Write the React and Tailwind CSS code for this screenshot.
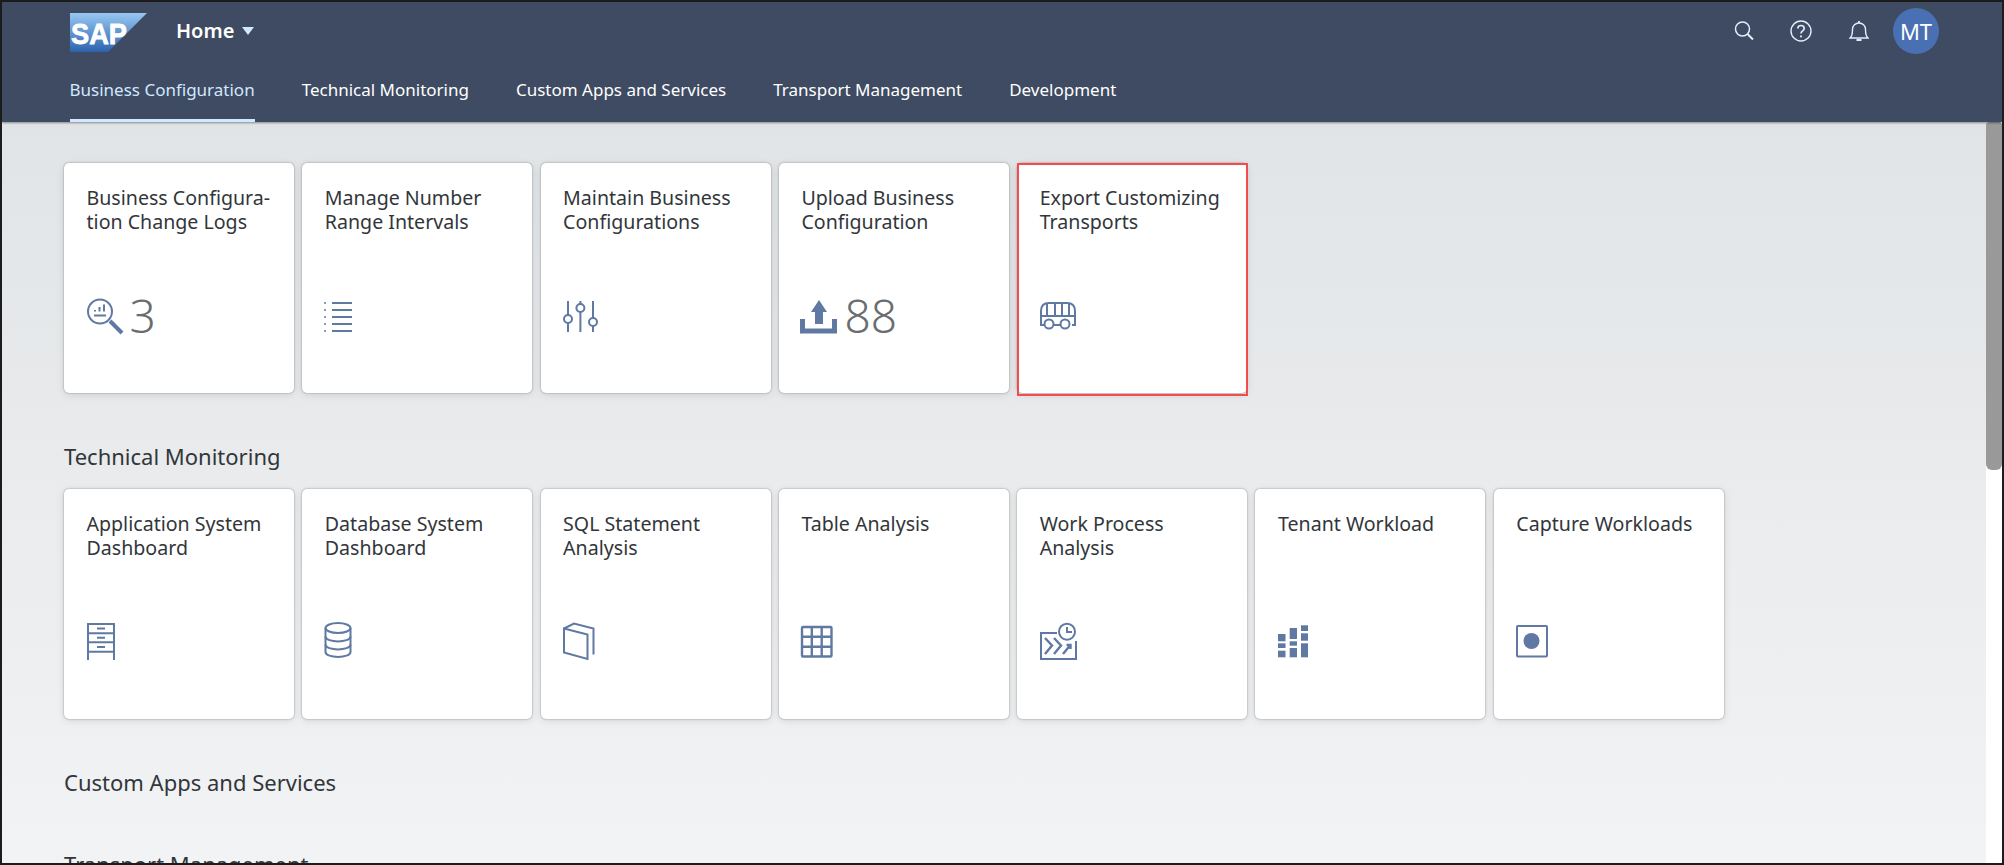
import React from "react";

const tabs = ["Business Configuration", "Technical Monitoring", "Custom Apps and Services", "Transport Management", "Development"];

// Tile icons share one 40x40 box
const Icon = ({ children }) => (
  <svg viewBox="0 0 40 40" className="w-10 h-10 overflow-visible shrink-0 text-[#5f79a3]" fill="none" stroke="currentColor" strokeWidth="2">
    {children}
  </svg>
);

const LogSearchIcon = () => (
  <Icon>
    <circle cx="13" cy="16.5" r="12" />
    <path d="M23 26 L35 38" strokeWidth="4" />
    <path d="M7 20.5 H19" />
    <path d="M8 15 V16.5 M12.5 12 V16.5 M17 9.5 V16.5" />
  </Icon>
);

const ListIcon = () => (
  <Icon>
    <path d="M7 8 H27 M7 15 H27 M7 22 H27 M7 29 H27 M7 36 H27" />
    <path d="M-1 8 H1 M-1 15 H1 M-1 22 H1 M-1 29 H1 M-1 36 H1" strokeWidth="1.6" />
  </Icon>
);

const SlidersIcon = () => (
  <Icon>
    <path d="M5 6 V37 M17.4 6 V37 M30 6 V37" />
    <circle cx="5" cy="24" r="4" fill="white" />
    <circle cx="17.4" cy="13" r="4" fill="white" />
    <circle cx="30" cy="27" r="4" fill="white" />
  </Icon>
);

const UploadIcon = () => (
  <Icon>
    <path d="M18 5 L26 17 H22 V29 H14 V17 H10 Z M-1 24 H4 V33.5 H31 V24 H36 V38.5 H-1 Z" fill="currentColor" stroke="none" />
  </Icon>
);

const BusIcon = () => (
  <Icon>
    <path d="M4 30 H1 V16 Q1 8 9 8 H27 Q35 8 35 16 V30 H32" />
    <path d="M1 21 H35 M7 8 V21 M15 8 V21 M22 8 V21 M29 8 V21 M14 30 H20" />
    <circle cx="9" cy="29" r="4.5" />
    <circle cx="25" cy="29" r="4.5" />
  </Icon>
);

const CabinetIcon = () => (
  <Icon>
    <path d="M1 39 V3 H27 V39 M1 12.3 H27 M1 21.3 H27 M1 30.7 H27" />
    <path d="M10 7.5 H18 M10 16.8 H18 M10 26 H18" />
  </Icon>
);

const DatabaseIcon = () => (
  <Icon>
    <ellipse cx="13" cy="7" rx="12.5" ry="5" />
    <path d="M0.5 7 V31 C0.5 37.5 25.5 37.5 25.5 31 V7" />
    <path d="M0.5 15.5 C0.5 22 25.5 22 25.5 15.5 M0.5 23.5 C0.5 30 25.5 30 25.5 23.5" />
  </Icon>
);

const BookIcon = () => (
  <Icon>
    <path d="M1 7.5 L24.5 13.5 V38 L1 31.5 Z" />
    <path d="M1 7.5 L11 2.5 L30.5 7.5 V33.5" />
  </Icon>
);

const TableIcon = () => (
  <Icon>
    <rect x="1" y="6" width="29.5" height="29.5" rx="1" strokeWidth="2.4" />
    <path d="M10.8 6 V35.5 M20.7 6 V35.5 M1 15.8 H30.5 M1 25.7 H30.5" strokeWidth="2.4" />
  </Icon>
);

const WorkProcessIcon = () => (
  <Icon>
    <path d="M17 12 H1 V38 H36 V20" />
    <circle cx="27" cy="10.7" r="8" />
    <path d="M27 6 V11 H32" />
    <path d="M5 17 L12 24.5 L5 33 M14 17 L21 24.5 L14 33 M23 33 L30 24.5 M26.5 24 H30.5 V28" strokeWidth="2.4" />
  </Icon>
);

const WorkloadIcon = () => (
  <Icon>
    <g fill="currentColor" stroke="none">
      <rect x="0" y="13" width="7.5" height="7.3" />
      <rect x="0" y="22.3" width="7.5" height="4.7" />
      <rect x="0" y="29.7" width="7.5" height="6.6" />
      <rect x="11.7" y="7" width="7.3" height="11" />
      <rect x="11.7" y="20.3" width="7.3" height="4.4" />
      <rect x="11.7" y="27" width="7.3" height="9.3" />
      <rect x="23" y="4.3" width="7" height="5.7" />
      <rect x="23" y="12.3" width="7" height="7.4" />
      <rect x="23" y="22.3" width="7" height="14" />
    </g>
  </Icon>
);

const CaptureIcon = () => (
  <Icon>
    <rect x="1" y="5" width="30" height="30.5" rx="1" />
    <circle cx="15.5" cy="20" r="8" fill="currentColor" stroke="none" />
  </Icon>
);

const firstRow = [
  { title: ["Business Configura-", "tion Change Logs"], icon: <LogSearchIcon />, count: "3" },
  { title: ["Manage Number", "Range Intervals"], icon: <ListIcon /> },
  { title: ["Maintain Business", "Configurations"], icon: <SlidersIcon /> },
  { title: ["Upload Business", "Configuration"], icon: <UploadIcon />, count: "88" },
  { title: ["Export Customizing", "Transports"], icon: <BusIcon />, marked: true },
];

const secondRow = [
  { title: ["Application System", "Dashboard"], icon: <CabinetIcon /> },
  { title: ["Database System", "Dashboard"], icon: <DatabaseIcon /> },
  { title: ["SQL Statement", "Analysis"], icon: <BookIcon /> },
  { title: ["Table Analysis"], icon: <TableIcon /> },
  { title: ["Work Process", "Analysis"], icon: <WorkProcessIcon /> },
  { title: ["Tenant Workload"], icon: <WorkloadIcon /> },
  { title: ["Capture Workloads"], icon: <CaptureIcon /> },
];

const Tile = ({ title, icon, count, marked }) => (
  <div className="relative w-[230px] h-[230px] shrink-0 bg-white rounded-[5px] pl-[22.5px] pt-[23px] shadow-[0_0_2px_rgba(0,0,0,0.4),0_2px_8px_rgba(0,0,0,0.1)]">
    <div className="h-[109px] text-[19.6px] leading-[23.5px] text-[#32363a] whitespace-nowrap">
      {title.map((line) => (
        <div key={line}>{line}</div>
      ))}
    </div>
    <div className="flex items-center h-10">
      {icon}
      {count && <span className="-mt-[1px] ml-[3px] text-[46px] leading-none font-light text-[#6a6d70]">{count}</span>}
    </div>
    {marked && <div className="absolute top-0 left-0 -right-[1px] -bottom-[3px] border-2 border-[#f24c4c]" />}
  </div>
);

export default function App() {
  return (
    <div className="w-[2004px] h-[865px] flex flex-col overflow-hidden border-2 border-[#1c1c1c] font-['Noto_Sans',sans-serif]">
      <header className="h-[120px] shrink-0 bg-[#3e4b62] shadow-[0_1px_2px_rgba(0,0,0,0.4)] z-10">
        <div className="h-[58px] flex items-center pl-[68px] pr-[63px]">
          <svg viewBox="0 0 77 39" className="w-[77px] h-[39px] mt-[3px]">
            <defs>
              <linearGradient id="sap" x1="0" y1="0" x2="0" y2="1">
                <stop offset="0" stopColor="#97c8f2" />
                <stop offset="1" stopColor="#2d63ad" />
              </linearGradient>
            </defs>
            <path d="M0 0 H77 L38 39 H0 Z" fill="url(#sap)" />
            <text x="1" y="31" fontFamily="Liberation Sans" fontWeight="700" fontSize="30" textLength="56" lengthAdjust="spacingAndGlyphs" fill="white" stroke="white" strokeWidth="0.8">SAP</text>
          </svg>
          <span className="ml-[29px] text-[20px] font-semibold text-white">Home</span>
          <svg viewBox="0 0 12 8" className="ml-[8px] w-3 h-2 text-[#d1e8ff]">
            <path d="M0 0 H12 L6 8 Z" fill="currentColor" />
          </svg>
          <div className="flex-1" />
          <svg viewBox="0 0 20 20" className="w-5 h-5 text-[#e3eefa]" fill="none" stroke="currentColor" strokeWidth="1.5">
            <circle cx="8.5" cy="8" r="7" />
            <path d="M13.5 13 L19 18.5" strokeWidth="2" />
          </svg>
          <svg viewBox="0 0 22 22" className="ml-[36px] w-[22px] h-[22px] text-[#e3eefa]" fill="none" stroke="currentColor" strokeWidth="1.4">
            <circle cx="11" cy="11" r="10" />
            <path d="M7.8 8.5 C7.8 4.5 14.2 4.5 14.2 8.5 C14.2 11 11 10.8 11 13.5" strokeWidth="1.7" />
            <path d="M11 15.5 V17.2" strokeWidth="1.9" />
          </svg>
          <svg viewBox="0 0 20 22" className="ml-[37px] w-5 h-[22px] text-[#e3eefa]" fill="none" stroke="currentColor" strokeWidth="1.4">
            <path d="M1 18 C3.5 16 3.5 13.5 3.5 9.5 C3.5 5.5 6.5 3 10 3 C13.5 3 16.5 5.5 16.5 9.5 C16.5 13.5 16.5 16 19 18 Z" />
            <path d="M10 1 V3 M7.5 20 H12.5" strokeWidth="1.8" />
          </svg>
          <div className="ml-[24px] w-[46px] h-[46px] rounded-full bg-[#4a70b4] flex items-center justify-center text-[22px] text-white">MT</div>
        </div>
        <nav className="h-[62px] flex gap-[47px] pl-[67.5px]">
          {tabs.map((tab, i) => (
            <div
              key={tab}
              className={
                i === 0
                  ? "h-full flex items-center text-[17px] text-[#d1e8ff] border-b-[3px] border-[#d1e8ff] pt-[1px]"
                  : "h-full flex items-center text-[17px] text-white border-b-[3px] border-transparent pt-[1px]"
              }
            >
              {tab}
            </div>
          ))}
        </nav>
      </header>

      <div className="flex-1 min-h-0 flex">
        <main className="flex-1 min-w-0 overflow-hidden bg-gradient-to-b from-[#e1e4e6] to-[#f2f3f5] pl-[62px] pt-[41px]">
          <div className="flex gap-[8.3px]">
            {firstRow.map((tile) => (
              <Tile key={tile.title[0]} {...tile} />
            ))}
          </div>
          <h2 className="mt-[45px] mb-[15px] h-[36px] leading-[36px] text-[22px] text-[#32363a]">Technical Monitoring</h2>
          <div className="flex gap-[8.3px]">
            {secondRow.map((tile) => (
              <Tile key={tile.title[0]} {...tile} />
            ))}
          </div>
          <h2 className="mt-[45px] h-[36px] leading-[36px] text-[22px] text-[#32363a]">Custom Apps and Services</h2>
          <h2 className="mt-[46px] h-[36px] leading-[36px] text-[22px] text-[#32363a]">Transport Management</h2>
        </main>
        <div className="w-[16px] shrink-0 bg-white">
          <div className="h-[348px] bg-[#999999] rounded-b-[6px] rounded-t-[3px]" />
        </div>
      </div>
    </div>
  );
}
